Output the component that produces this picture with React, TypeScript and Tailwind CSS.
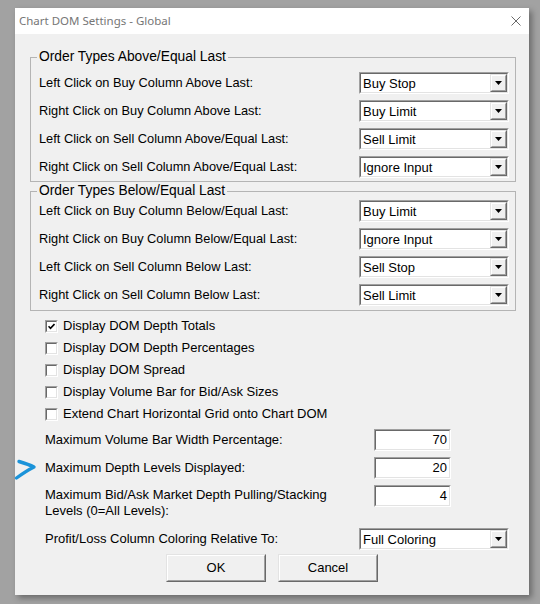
import React from "react"

const font = { fontFamily: '"Liberation Sans", Arial, sans-serif' }

// classic 3D edges
const sunkenOuter = "border border-t-[#a0a0a0] border-l-[#a0a0a0] border-b-white border-r-white"
const sunkenInner = "border border-t-[#696969] border-l-[#696969] border-b-[#e3e3e3] border-r-[#e3e3e3]"
const raisedOuter = "border border-t-[#e3e3e3] border-l-[#e3e3e3] border-b-[#696969] border-r-[#696969]"
const raisedInner = "border border-t-white border-l-white border-b-[#a0a0a0] border-r-[#a0a0a0]"

function Combo({ value }: { value: string }) {
  return (
    <div className={`w-[150px] h-[22px] ${sunkenOuter}`}>
      <div className={`h-full flex items-center bg-white ${sunkenInner}`}>
        <span className="flex-1 pl-[2px] text-[13px] leading-none text-black">{value}</span>
        <div className={`w-[17px] h-full bg-[#f0f0f0] ${raisedOuter}`}>
          <div className={`h-full flex items-center justify-center ${raisedInner}`}>
            <svg width="7" height="4" viewBox="0 0 7 4">
              <polygon points="0,0 7,0 3.5,4" fill="#000" />
            </svg>
          </div>
        </div>
      </div>
    </div>
  )
}

function Edit({ value }: { value: string }) {
  return (
    <div className={`w-[77px] h-[22px] ${sunkenOuter}`}>
      <div className={`h-full flex items-center justify-end pr-[2px] bg-white text-[13px] text-black ${sunkenInner}`}>
        {value}
      </div>
    </div>
  )
}

function Check({ checked, label }: { checked?: boolean; label: string }) {
  return (
    <div className="h-[22px] flex items-center">
      <div className={`w-[13px] h-[13px] ${sunkenOuter}`}>
        <div className={`w-full h-full bg-white flex items-center justify-center ${sunkenInner}`}>
          {checked && (
            <svg width="7" height="7" viewBox="0 0 7 7">
              <path d="M0.5 3.2 L2.5 5.4 L6.5 1" stroke="#000" strokeWidth="1.6" fill="none" />
            </svg>
          )}
        </div>
      </div>
      <span className="ml-[5px] text-[13px] text-black">{label}</span>
    </div>
  )
}

function Button({ label }: { label: string }) {
  return (
    <div className={`w-[100px] h-[28px] bg-[#f0f0f0] ${raisedOuter}`}>
      <div className={`h-full flex items-center justify-center text-[13px] text-black ${raisedInner}`}>{label}</div>
    </div>
  )
}

function Group({ title, rows, spacing }: { title: string; rows: [string, string][]; spacing: string }) {
  return (
    <fieldset className={`ml-[15px] mr-[13px] border border-[#b4b4b4] pl-[8px] pr-[6px] ${spacing}`}>
      <legend className="-ml-[2px] px-[2px] text-[13.8px] leading-[16px] text-black">{title}</legend>
      <div className="flex flex-col gap-[6px]">
        {rows.map(([label, value]) => (
          <div key={label} className="h-[22px] flex items-center justify-between">
            <span className="text-[12.8px] text-black">{label}</span>
            <Combo value={value} />
          </div>
        ))}
      </div>
    </fieldset>
  )
}

export default function App() {
  const above: [string, string][] = [
    ["Left Click on Buy Column Above Last:", "Buy Stop"],
    ["Right Click on Buy Column Above Last:", "Buy Limit"],
    ["Left Click on Sell Column Above/Equal Last:", "Sell Limit"],
    ["Right Click on Sell Column Above/Equal Last:", "Ignore Input"],
  ]
  const below: [string, string][] = [
    ["Left Click on Buy Column Below/Equal Last:", "Buy Limit"],
    ["Right Click on Buy Column Below/Equal Last:", "Ignore Input"],
    ["Left Click on Sell Column Below Last:", "Sell Stop"],
    ["Right Click on Sell Column Below Last:", "Sell Limit"],
  ]

  return (
    <div className="relative w-[540px] h-[604px] bg-[#a2a2a2] overflow-hidden pt-[8px] pl-[15px]" style={font}>
      <div className="w-[514px] h-[587px] bg-[#f0f0f0] shadow-[3px_3px_6px_rgba(0,0,0,0.35)] flex flex-col">
        {/* title bar */}
        <div className="h-[26px] bg-white flex items-center justify-between pl-[4px] pr-[8px]">
          <span className="text-[11.5px] text-[#767676]" style={{ fontFamily: '"Segoe UI", "Noto Sans", sans-serif' }}>
            Chart DOM Settings - Global
          </span>
          <svg width="10" height="10" viewBox="0 0 10 10">
            <path d="M0.5 0.5 L9.5 9.5 M9.5 0.5 L0.5 9.5" stroke="#6a6a6a" strokeWidth="1" />
          </svg>
        </div>

        <div className="flex flex-col pt-[15px]">
          <Group title="Order Types Above/Equal Last" rows={above} spacing="pt-[7px] pb-[3px]" />
          <Group title="Order Types Below/Equal Last" rows={below} spacing="mt-[1px] pt-[1px] pb-[4px]" />

          {/* display toggles */}
          <div className="mt-[4px] pl-[30px] flex flex-col">
            <Check checked label="Display DOM Depth Totals" />
            <Check label="Display DOM Depth Percentages" />
            <Check label="Display DOM Spread" />
            <Check label="Display Volume Bar for Bid/Ask Sizes" />
            <Check label="Extend Chart Horizontal Grid onto Chart DOM" />
          </div>

          {/* numeric settings */}
          <div className="mt-[4px] pl-[30px] grid grid-cols-[329px_77px] gap-y-[6px] text-[13px] text-black">
            <div className="h-[22px] flex items-center">Maximum Volume Bar Width Percentage:</div>
            <Edit value="70" />
            <div className="h-[22px] flex items-center">Maximum Depth Levels Displayed:</div>
            <Edit value="20" />
            <div className="mt-[2px] leading-[16px]">
              Maximum Bid/Ask Market Depth Pulling/Stacking
              <br />
              Levels (0=All Levels):
            </div>
            <Edit value="4" />
          </div>

          <div className="mt-[9px] pl-[30px] pr-[20px] flex items-center justify-between">
            <span className="text-[13px] text-black">Profit/Loss Column Coloring Relative To:</span>
            <Combo value="Full Coloring" />
          </div>

          <div className="mt-[4px] flex justify-center gap-[12px]">
            <Button label="OK" />
            <Button label="Cancel" />
          </div>
        </div>
      </div>

      {/* blue pen mark */}
      <svg className="absolute left-[13px] top-[458px]" width="24" height="24" viewBox="0 0 24 24">
        <path d="M6 3.5 C11 5 16 6.5 21 9 C15 12 9 16 3.5 20" stroke="#1b93d9" strokeWidth="3.4" fill="none" strokeLinecap="round" strokeLinejoin="round" />
      </svg>
    </div>
  )
}
